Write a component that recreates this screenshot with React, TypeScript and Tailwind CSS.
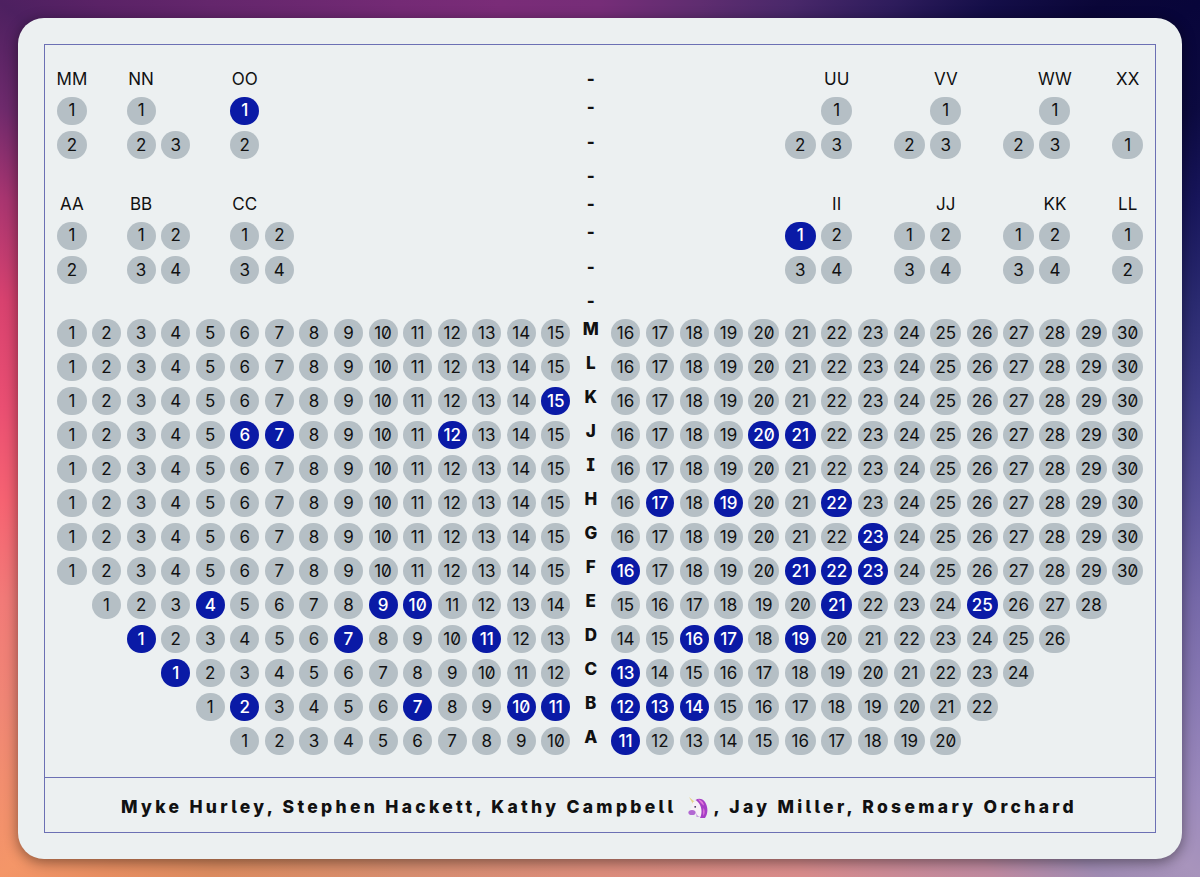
const LEFT = [1, 2, 3, 4, 5, 6, 7, 8, 9, 10, 11, 12, 13, 14, 15];

// row: letter, first occupied column on the left, first column after the aisle is always 16
const rows = [
  { name: "M", start: 1, last: 30, on: [] },
  { name: "L", start: 1, last: 30, on: [] },
  { name: "K", start: 1, last: 30, on: [15] },
  { name: "J", start: 1, last: 30, on: [6, 7, 12, 20, 21] },
  { name: "I", start: 1, last: 30, on: [] },
  { name: "H", start: 1, last: 30, on: [17, 19, 22] },
  { name: "G", start: 1, last: 30, on: [23] },
  { name: "F", start: 1, last: 30, on: [16, 21, 22, 23] },
  { name: "E", start: 2, last: 28, on: [4, 9, 10, 21, 25] },
  { name: "D", start: 3, last: 26, on: [1, 7, 11, 16, 17, 19] },
  { name: "C", start: 4, last: 24, on: [1, 13] },
  { name: "B", start: 5, last: 22, on: [2, 7, 10, 11, 12, 13, 14] },
  { name: "A", start: 6, last: 20, on: [11] },
];

type Cell = { n: number; on?: boolean };
type Cells = Record<number, Cell>;

const upper: { labels: Record<number, string>; a: Cells; b: Cells }[] = [
  {
    labels: { 1: "MM", 3: "NN", 6: "OO", 22: "UU", 25: "VV", 28: "WW", 30: "XX" },
    a: { 1: { n: 1 }, 3: { n: 1 }, 6: { n: 1, on: true }, 22: { n: 1 }, 25: { n: 1 }, 28: { n: 1 } },
    b: { 1: { n: 2 }, 3: { n: 2 }, 4: { n: 3 }, 6: { n: 2 }, 21: { n: 2 }, 22: { n: 3 }, 24: { n: 2 }, 25: { n: 3 }, 27: { n: 2 }, 28: { n: 3 }, 30: { n: 1 } },
  },
  {
    labels: { 1: "AA", 3: "BB", 6: "CC", 22: "II", 25: "JJ", 28: "KK", 30: "LL" },
    a: { 1: { n: 1 }, 3: { n: 1 }, 4: { n: 2 }, 6: { n: 1 }, 7: { n: 2 }, 21: { n: 1, on: true }, 22: { n: 2 }, 24: { n: 1 }, 25: { n: 2 }, 27: { n: 1 }, 28: { n: 2 }, 30: { n: 1 } },
    b: { 1: { n: 2 }, 3: { n: 3 }, 4: { n: 4 }, 6: { n: 3 }, 7: { n: 4 }, 21: { n: 3 }, 22: { n: 4 }, 24: { n: 3 }, 25: { n: 4 }, 27: { n: 3 }, 28: { n: 4 }, 30: { n: 2 } },
  },
];

const COLUMNS = Array.from({ length: 30 }, (_, i) => i + 1);

function Seat({ n, on }: Cell) {
  return (
    <div
      className={`flex h-[28px] w-[calc(100%-5.5px)] items-center justify-center rounded-full text-[17px] leading-none [font-feature-settings:'ss02'] slashed-zero ${
        on ? "bg-[#0a1aa6] font-medium text-white" : "bg-[#b5bfc5] text-[#111]"
      }`}
    >
      {n}
    </div>
  );
}

function Row({
  children,
  aisle,
  aisleClass,
  className,
}: {
  children: (col: number) => React.ReactNode;
  aisle?: string;
  aisleClass: string;
  className: string;
}) {
  return (
    <div className={`grid grid-cols-[repeat(15,34.57px)_35.3px_repeat(4,34.33px)_repeat(11,36.39px)] items-center justify-items-center ${className}`}>
      {LEFT.map((col) => (
        <div key={col} className="flex w-full justify-center">
          {children(col)}
        </div>
      ))}
      <div className={`text-[17px] leading-none font-extrabold [font-feature-settings:'ss02'] ${aisleClass}`}>{aisle ?? "-"}</div>
      {COLUMNS.slice(15).map((col) => (
        <div key={col} className="flex w-full justify-center">
          {children(col)}
        </div>
      ))}
    </div>
  );
}

function Unicorn() {
  return (
    <svg viewBox="0 0 20 21" className="h-[21px] w-[20px]">
      <path d="M1 0 L7.5 5.5 L5 7 Z" fill="#e6d28a" />
      <path d="M5 5 C8 3 11 5 12.5 8 L13.5 19 L8 19 L8 15.5 L4 17 L2 14 Z" fill="#f7f0f7" />
      <path d="M7.5 3 C12 -0.5 18 3 19 10 C20 14 19 18 17 21 L12 21 C14 17 14 12 12 8 C11 6 9.5 4 7.5 3 Z" fill="#a63fc6" />
      <path d="M10 2.5 C13 2.5 15.5 5 16 8.5 C14 7.5 12 5 10 2.5 Z" fill="#e27ad8" />
      <path d="M15.5 11 C17 13 17 16 15.5 19 C15 16.5 15 13.5 15.5 11 Z" fill="#e27ad8" />
      <ellipse cx="4" cy="15.5" rx="3.6" ry="2.6" fill="#b268d2" />
      <path d="M8 16 C9 18 10 19.5 12 20 L8.5 20 Z" fill="#c79ade" />
      <circle cx="7.2" cy="9.8" r="0.9" fill="#3a2a55" />
    </svg>
  );
}

export default function App() {
  return (
    <div className="h-[877px] w-[1200px] overflow-hidden bg-[conic-gradient(at_50%_50%,#762d78_0deg,#5f2d70_13deg,#49286a_24deg,#2e1c5c_34deg,#140e48_42deg,#0a0638_49deg,#08053a_54deg,#0c0a40_61deg,#17155a_68deg,#2a2a70_77deg,#3f3c85_86deg,#5a5298_96deg,#7568a8_105deg,#8a7ab4_114deg,#9c8abc_121deg,#a894bc_126deg,#a08cb4_131deg,#c08aa0_138deg,#d98c8c_155deg,#dd8d7c_180deg,#d88e70_204deg,#dd8c60_222deg,#e98f62_229deg,#f49668_234deg,#f08675_246deg,#f27a78_255deg,#f66372_264deg,#ea4f72_273deg,#d8426f_283deg,#a83570_292deg,#6e2a6c_299deg,#4d2060_306deg,#5a2266_311deg,#64266c_318deg,#742a75_335deg,#7a2c78_347deg,#762d78_360deg)] p-[18px] font-['Inter',sans-serif] text-[#111]">
      <div className="h-[841px] w-[1164px] rounded-[26px] bg-[#ecf0f1] p-[26px] shadow-[0_3px_14px_rgba(0,0,0,0.45)]">
        <div className="flex h-[789px] flex-col border border-[#6c70b4]">
          <div className="flex-1 pt-[20px] pl-[9.7px]">
            {upper.map((block, i) => (
              <div key={i}>
                <Row className="h-[28px]" aisleClass="translate-y-0">
                  {(col) => <span className="text-[17px] leading-none">{block.labels[col]}</span>}
                </Row>
                <Row className="h-[35px]" aisleClass="-translate-y-[3px]">
                  {(col) => block.a[col] && <Seat {...block.a[col]} />}
                </Row>
                <Row className="h-[34px]" aisleClass="-translate-y-[3px]">
                  {(col) => block.b[col] && <Seat {...block.b[col]} />}
                </Row>
                <Row className={i === 0 ? "h-[28px]" : "h-[29px]"} aisleClass="translate-y-0">
                  {() => null}
                </Row>
              </div>
            ))}
            {rows.map((row) => {
              // the left block runs to 15 whatever the start, the numbers after the aisle carry on
              const leftCount = 15 - row.start + 1;
              return (
                <Row key={row.name} className="h-[34px]" aisle={row.name} aisleClass="-translate-y-[4px]">
                  {(col) => {
                    const n = col <= 15 ? col - row.start + 1 : col - 15 + leftCount;
                    if (n < 1 || n > row.last) return null;
                    return <Seat n={n} on={row.on.includes(n)} />;
                  }}
                </Row>
              );
            })}
          </div>
          <div className="flex h-[55px] items-center justify-center border-t border-[#6c70b4] pt-[4px] pr-[2px] text-[17.5px] font-extrabold tracking-[3.3px] [font-feature-settings:'ss02']">
            <span>Myke Hurley, Stephen Hackett, Kathy Campbell</span>
            <span className="mr-[6px] ml-[11px]">
              <Unicorn />
            </span>
            <span>, Jay Miller, Rosemary Orchard</span>
          </div>
        </div>
      </div>
    </div>
  );
}
